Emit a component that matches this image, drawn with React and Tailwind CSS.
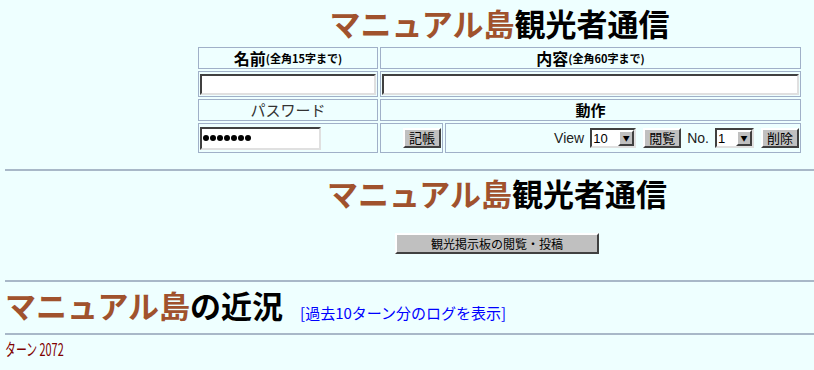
import React from "react";

/* ---------- shared looks (old Windows form controls) ---------- */
const cellBorder = "border border-[#a0b0c8]";
const inset =
  "border-2 border-t-[#404040] border-l-[#404040] border-b-[#e0e0e0] border-r-[#e0e0e0] bg-white";
const raised =
  "border-2 border-t-white border-l-white border-b-[#404040] border-r-[#404040] bg-[#c0c0c0]";

const Brand = ({ rest }) => (
  <>
    <span className="text-[#a0522d]">マニュアル島</span>
    <span className="text-black">{rest}</span>
  </>
);

const Btn = ({ children, className = "" }) => (
  <button
    className={`${raised} h-[20px] px-[4px] text-[13px] leading-[14px] text-black ${className}`}
  >
    {children}
  </button>
);

const FakeSelect = ({ value, width }) => (
  <div className={`${inset} flex items-center h-[20px] ${width}`}>
    <span className="flex-1 pl-[1px] text-[13px] leading-none font-['Liberation_Sans',sans-serif]">
      {value}
    </span>
    <span
      className={`${raised} flex items-center justify-center w-[16px] h-[16px] text-[7px] leading-none`}
    >
      ▼
    </span>
  </div>
);

export default function App() {
  return (
    <div className="min-h-screen bg-[#eeffff] font-['Noto_Sans_CJK_JP',sans-serif] text-black overflow-hidden">
      {/* ------------------- TOP FORM ------------------- */}
      <div className="pl-[198px]">
        <h1 className="w-[603px] text-center text-[31px] font-bold leading-[46px]">
          <Brand rest="観光者通信" />
        </h1>

        <div className="grid grid-cols-[180px_63px_356px] gap-[2px] w-[603px] mt-[1px]">
          {/* header row */}
          <div className={`${cellBorder} h-[22px] flex items-center justify-center font-bold`}>
            <span className="text-[16px] leading-none">名前</span>
            <span className="text-[11px] leading-none">(全角15字まで)</span>
          </div>
          <div
            className={`${cellBorder} col-span-2 h-[22px] flex items-center justify-center font-bold`}
          >
            <span className="text-[16px] leading-none">内容</span>
            <span className="text-[11px] leading-none">(全角60字まで)</span>
          </div>

          {/* input row */}
          <div className={`${cellBorder} h-[26px] flex items-center px-[1px]`}>
            <input className={`${inset} w-full h-[21px] outline-none`} />
          </div>
          <div className={`${cellBorder} col-span-2 h-[26px] flex items-center px-[1px]`}>
            <input className={`${inset} w-full h-[21px] outline-none`} />
          </div>

          {/* header row 2 */}
          <div
            className={`${cellBorder} h-[22px] flex items-center justify-center text-[15px] text-[#333]`}
          >
            パスワード
          </div>
          <div
            className={`${cellBorder} col-span-2 h-[22px] flex items-center justify-center text-[15px] font-bold`}
          >
            動作
          </div>

          {/* action row */}
          <div className={`${cellBorder} h-[30px] flex items-center px-[1px]`}>
            <div
              className={`${inset} w-[121px] h-[23px] flex items-center gap-[1px] pl-[1px]`}
              aria-label="password"
            >
              {Array.from({ length: 7 }).map((_, i) => (
                <span key={i} className="w-[6px] h-[6px] rounded-full bg-black" />
              ))}
            </div>
          </div>
          <div className={`${cellBorder} h-[30px] flex items-center justify-end pr-[1px]`}>
            <Btn>記帳</Btn>
          </div>
          <div
            className={`${cellBorder} h-[30px] flex items-center justify-end gap-[6px] pr-[1px]`}
          >
            <span className="text-[14px] text-[#222] font-['Liberation_Sans',sans-serif]">
              View
            </span>
            <FakeSelect value="10" width="w-[46px]" />
            <Btn className="ml-[1px]">閲覧</Btn>
            <span className="text-[14px] text-[#222] font-['Liberation_Sans',sans-serif]">
              No.
            </span>
            <FakeSelect value="1" width="w-[39px]" />
            <Btn className="ml-[1px]">削除</Btn>
          </div>
        </div>
      </div>

      {/* ------------------- SECOND BLOCK ------------------- */}
      <div className="ml-[5px] mt-[16px] h-[2px] bg-[#a8b8c8]" />

      <div className="pl-[180px]">
        <h2 className="text-center text-[31px] font-bold leading-[44px]">
          <Brand rest="観光者通信" />
        </h2>
        <div className="flex justify-center mt-[18px]">
          <button
            className={`${raised} w-[204px] h-[21px] text-[12px] leading-none text-black`}
          >
            観光掲示板の閲覧・投稿
          </button>
        </div>
      </div>

      {/* ------------------- ISLAND NEWS ------------------- */}
      <div className="ml-[5px] mt-[26px] h-[2px] bg-[#a8b8c8]" />

      <div className="flex items-end pl-[5px]">
        <h2 className="text-[31px] font-bold leading-[46px]">
          <Brand rest="の近況" />
        </h2>
        <a href="#" className="ml-[17px] mb-[8px] text-[15px] leading-none text-[#0000ff]">
          [過去10ターン分のログを表示]
        </a>
      </div>

      <div className="ml-[5px] mt-[5px] h-[2px] bg-[#a8b8c8]" />

      <div className="pl-[5px] mt-[4px] text-[17px] leading-[20px] text-[#800000]">
        <span className="inline-block origin-left scale-x-[0.64]">ターン 2072</span>
      </div>
    </div>
  );
}
